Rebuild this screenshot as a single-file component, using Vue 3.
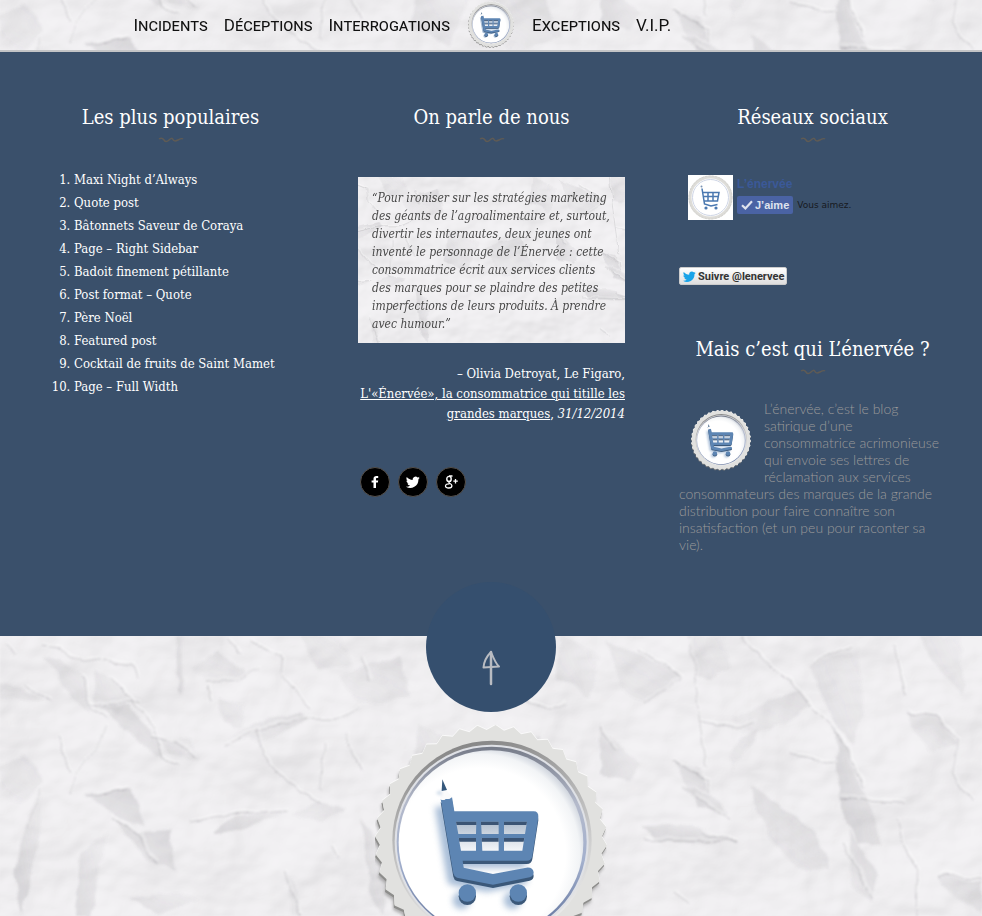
<script setup>
const leftLinks = ['Incidents', 'Déceptions', 'Interrogations']
const rightLinks = ['Exceptions', 'V.I.P.']

const posts = [
  'Maxi Night d’Always',
  'Quote post',
  'Bâtonnets Saveur de Coraya',
  'Page – Right Sidebar',
  'Badoit finement pétillante',
  'Post format – Quote',
  'Père Noël',
  'Featured post',
  'Cocktail de fruits de Saint Mamet',
  'Page – Full Width',
]

const quote = [
  '“Pour ironiser sur les stratégies marketing',
  'des géants de l’agroalimentaire et, surtout,',
  'divertir les internautes, deux jeunes ont',
  'inventé le personnage de l’Énervée : cette',
  'consommatrice écrit aux services clients',
  'des marques pour se plaindre des petites',
  'imperfections de leurs produits. À prendre',
  'avec humour.”',
]

const about = [
  'L’énervée, c’est le blog',
  'satirique d’une',
  'consommatrice acrimonieuse',
  'qui envoie ses lettres de',
  'réclamation aux services',
  'consommateurs des marques de la grande',
  'distribution pour faire connaître son',
  'insatisfaction (et un peu pour raconter sa',
  'vie).',
]

// Serrated edge of the bottle cap: alternating peaks and valleys.
const teeth = 40
const capEdge = Array.from({ length: teeth * 2 }, (_, i) => {
  const angle = (Math.PI * (i + 0.5)) / teeth
  const radius = i % 2 ? 333 : 348
  return `${(348 + radius * Math.sin(angle)).toFixed(1)},${(348 - radius * Math.cos(angle)).toFixed(1)}`
}).join(' ')

// Shaded folds of the crumpled paper: outline and darkness.
const folds = [
  ['42,20 60,24 82,38 92,75 70,60 58,38', 0.16],
  ['0,50 22,52 45,65 55,66 30,64 0,62', 0.13],
  ['92,34 110,42 130,62 118,78 96,68', 0.12],
  ['95,70 130,70 160,110 162,122 140,108 120,86', 0.18],
  ['176,0 184,0 183,58 178,54', 0.18],
  ['194,33 216,14 246,40 240,44 206,45', 0.14],
  ['220,62 244,68 242,92 222,84', 0.1],
  ['228,102 256,86 302,76 308,86 262,106', 0.16],
  ['155,100 188,104 200,124 170,118', 0.12],
  ['84,160 130,152 145,190 118,182 104,168', 0.22],
  ['42,150 40,196 22,280 14,240 30,176', 0.2],
  ['112,182 138,196 170,194 176,236 150,226', 0.22],
  ['212,196 236,180 290,174 250,192 222,198', 0.2],
  ['290,180 320,166 346,172 320,186', 0.14],
  ['80,218 106,196 90,280 76,280', 0.16],
  ['288,236 296,250 300,280 290,280', 0.16],
  ['130,262 180,256 200,264 160,278', 0.14],
  ['606,6 640,18 682,40 644,68 622,52', 0.14],
  ['690,0 724,0 728,32 712,42 694,40', 0.12],
  ['732,82 800,52 812,70 770,94 744,98', 0.14],
  ['808,28 858,12 864,80 850,110 834,84', 0.14],
  ['730,122 742,100 760,94 742,116 732,140', 0.12],
  ['600,88 616,104 640,128 630,144 600,138', 0.16],
  ['672,126 700,134 708,156 690,150', 0.22],
  ['684,148 720,164 728,180 698,170', 0.22],
  ['748,150 770,160 816,196 830,234 800,232 768,200', 0.18],
  ['836,90 856,140 872,170 880,210 856,206 840,170', 0.22],
  ['908,76 940,80 958,110 926,116', 0.15],
  ['640,190 690,188 734,206 700,208 654,204', 0.2],
  ['848,194 878,240 872,266 852,250', 0.2],
  ['920,0 960,0 964,60 940,34', 0.14],
  ['938,240 982,246 982,276 954,262', 0.16],
  ['362,182 384,210 384,280 372,262 366,212', 0.2],
  ['340,40 400,20 410,60 360,70', 0.12],
  ['560,0 600,20 590,60 556,44', 0.1],
  ['0,130 24,120 44,144 20,170 0,160', 0.1],
  ['420,90 470,110 450,160 410,140', 0.12],
  ['480,120 540,100 560,150 510,170', 0.12],
  ['300,0 340,0 352,30 318,34', 0.1],
]

// Crease lines.
const creases = [
  'M40,10 L62,12 L82,26 L104,23 L132,28 L138,42',
  'M8,8 L16,18', 'M52,66 L30,52 L24,48',
  'M110,42 L128,60 L150,84 L162,122 L180,128',
  'M82,38 L92,70 L106,82', 'M92,68 L142,66',
  'M60,100 L66,130 L70,136', 'M106,90 L94,116 L76,134 L68,158',
  'M150,101 L176,106 L196,122', 'M228,4 L240,18', 'M250,6 L280,18 L284,40 L310,72',
  'M206,46 L240,44 L258,30', 'M208,50 L212,66', 'M225,108 L256,94 L300,84 L334,84 L360,73',
  'M256,92 L264,120 L288,148 L322,168', 'M346,96 L360,136', 'M324,108 L320,154',
  'M42,150 L28,190', 'M88,162 L128,152', 'M112,182 L140,200 L156,228',
  'M190,186 L230,178 L288,174', 'M332,210 L338,222', 'M286,236 L300,280',
  'M690,0 L694,40 L706,130', 'M742,0 L772,32 L792,46 L812,70 L836,94 L864,150',
  'M640,12 L682,42 L642,68', 'M700,84 L740,92 L754,86', 'M790,118 L838,128',
  'M812,26 L852,10', 'M672,126 L708,144 L710,158', 'M694,160 L728,182',
  'M906,76 L938,80 L958,104 L953,140 L972,164', 'M840,162 L868,164 L906,166',
  'M898,184 L902,204 L918,234 L916,280', 'M644,204 L736,206 L700,196',
  'M844,208 L872,262', 'M674,256 L690,268', 'M938,240 L982,242', 'M600,90 L616,112',
  'M894,10 L906,60', 'M520,60 L548,74 L566,66', 'M372,46 L362,22',
]
</script>

<template>
  <div class="page">
    <svg class="sprite" width="0" height="0" aria-hidden="true">
      <defs>
        <filter id="relief" x="0" y="0" width="100%" height="100%">
          <feTurbulence type="fractalNoise" baseFrequency="0.009 0.011" numOctaves="4" seed="11" />
          <feDiffuseLighting surfaceScale="9" diffuseConstant="1.05" lighting-color="#f4f3f5">
            <feDistantLight azimuth="235" elevation="66" />
          </feDiffuseLighting>
        </filter>
        <filter id="rough" x="-5%" y="-5%" width="110%" height="110%">
          <feTurbulence type="fractalNoise" baseFrequency="0.05" numOctaves="2" seed="4" result="n" />
          <feDisplacementMap in="SourceGraphic" in2="n" scale="9" xChannelSelector="R" yChannelSelector="G" />
          <feGaussianBlur stdDeviation="0.9" />
        </filter>
        <filter id="soft" x="-30%" y="-30%" width="160%" height="160%"><feGaussianBlur stdDeviation="10" /></filter>
        <filter id="softer" x="-30%" y="-30%" width="160%" height="160%"><feGaussianBlur stdDeviation="4" /></filter>
        <linearGradient id="shade-a" x1="0.9" y1="0" x2="0.1" y2="1">
          <stop offset="0" stop-color="#77757c" />
          <stop offset="1" stop-color="#77757c" stop-opacity="0.15" />
        </linearGradient>
        <linearGradient id="shade-b" x1="0" y1="0.8" x2="1" y2="0.1">
          <stop offset="0" stop-color="#77757c" />
          <stop offset="1" stop-color="#77757c" stop-opacity="0.15" />
        </linearGradient>
        <linearGradient id="groove" x1="0.35" y1="0" x2="0.6" y2="1">
          <stop offset="0" stop-color="#858585" />
          <stop offset="0.35" stop-color="#b4b4b4" />
          <stop offset="0.7" stop-color="#d6d6d6" />
          <stop offset="1" stop-color="#efefef" />
        </linearGradient>
        <linearGradient id="rim" x1="0.5" y1="0" x2="0.5" y2="1">
          <stop offset="0" stop-color="#767b88" />
          <stop offset="0.3" stop-color="#b4bacb" />
          <stop offset="0.6" stop-color="#a3b0cd" />
          <stop offset="1" stop-color="#5c6f99" />
        </linearGradient>
        <radialGradient id="face" cx="0.44" cy="0.56" r="0.58">
          <stop offset="0.8" stop-color="#ffffff" />
          <stop offset="0.93" stop-color="#f2f4f6" />
          <stop offset="1" stop-color="#d3d8e0" />
        </radialGradient>
        <linearGradient id="hole" x1="0" y1="0" x2="0" y2="1">
          <stop offset="0" stop-color="#aebccd" />
          <stop offset="1" stop-color="#f4f6f9" />
        </linearGradient>
        <g id="cart-body">
          <path d="M227,672 Q234,678 243,671 Q253,674 261,666 L268,709 H506 Q521,709 520,726 L502,842 Q500,857 485,857 H293 L296,878 L384,897 L484,878 Q504,876 506,892 Q506,904 494,907 L384,929 L276,908 Q267,905 265,895 Z" />
          <circle cx="307" cy="954" r="26" />
          <circle cx="460" cy="954" r="26" />
        </g>
        <symbol id="cap" viewBox="0 0 696 720">
          <polygon :points="capEdge" fill="#777" opacity="0.55" transform="translate(-4 14)" filter="url(#softer)" />
          <polygon :points="capEdge" fill="#8d8d8b" transform="translate(-2 7)" />
          <polygon :points="capEdge" fill="#fafafa" transform="translate(0 -3)" />
          <polygon :points="capEdge" fill="#e1e1df" />
          <circle cx="351" cy="346" r="299" fill="url(#groove)" />
          <circle cx="350" cy="350" r="291" fill="#dfe1e6" />
          <circle cx="350" cy="350" r="285" fill="url(#rim)" />
          <circle cx="348" cy="353" r="277" fill="url(#face)" />
          <g transform="translate(-30 -450)">
            <use href="#cart-body" transform="translate(-18 22)" fill="#6f93bd" opacity="0.6" filter="url(#soft)" />
            <use href="#cart-body" transform="translate(0 10)" fill="#3b5879" />
            <use href="#cart-body" fill="#5d85b3" />
            <path d="M226,672 L230,648 H246 L261,666 Q253,674 243,671 Q234,678 226,672Z" fill="#fbfbfb" />
            <path d="M212,655 L228,644 L230,662Z" fill="#9db6d2" opacity="0.5" filter="url(#softer)" />
            <path d="M232,613 L246,645 L230,648 Z" fill="#35587c" />
            <path d="M273,740 H334 L333,777 H280Z M348,740 H401 V777 H350Z M417,740 H486 L480,777 H417Z M281,789 H333 V827 H288Z M350,789 H401 V827 H352Z M417,789 H478 L472,827 H417Z" fill="url(#hole)" />
            <path d="M273,740 H334 V750 H275Z M348,740 H401 V750 H348Z M417,740 H486 L484,750 H417Z M281,789 H333 V800 H283Z M350,789 H401 V800 H350Z M417,789 H478 L476,800 H417Z" fill="#3b5474" />
          </g>
        </symbol>
        <symbol id="paper" viewBox="0 0 982 280" preserveAspectRatio="xMidYMid slice">
          <rect width="982" height="280" fill="#efeef0" />
          <rect width="982" height="280" filter="url(#relief)" opacity="0.5" />
          <g filter="url(#rough)">
            <polygon
              v-for="(fold, i) in folds"
              :key="i"
              :points="fold[0]"
              :fill="i % 2 ? 'url(#shade-a)' : 'url(#shade-b)'"
              :opacity="fold[1]"
            />
            <g fill="none" stroke-linejoin="round">
              <path v-for="crease in creases" :key="crease" :d="crease" stroke="#85838a" stroke-width="1" opacity="0.4" />
              <path v-for="crease in creases" :key="'h' + crease" :d="crease" stroke="#fff" stroke-width="2" opacity="0.35" transform="translate(1 -2)" />
            </g>
          </g>
        </symbol>
        <symbol id="bird" viewBox="0 0 24 24">
          <path d="M23.6 4.9c-.9.4-1.8.6-2.8.8 1-.6 1.800-1.600 2.100-2.700-.9.600-2 1-3.100 1.200A4.900 4.900 0 0 0 11.500 8.600C7.400 8.400 3.800 6.500 1.400 3.500c-1.300 2.200-.7 5.100 1.500 6.600-.8 0-1.600-.2-2.200-.6 0 2.300 1.600 4.400 3.900 4.900-.7.200-1.500.2-2.200.1.600 2 2.400 3.400 4.600 3.400A9.900 9.900 0 0 1-.2 19.900 13.900 13.900 0 0 0 21.200 7.500c.9-.7 1.800-1.600 2.400-2.600z" />
        </symbol>
        <symbol id="squiggle" viewBox="0 0 26 6">
          <path d="M1,2 Q4,0 6,3 T11,3 T15,2.500 T20,3 T25,2" fill="none" stroke="#5f5b55" stroke-width="1.500" />
        </symbol>
      </defs>
    </svg>

    <header class="topbar">
      <svg class="paper" aria-hidden="true"><use href="#paper" /></svg>
      <nav class="nav">
        <div class="side side-left">
          <a v-for="link in leftLinks" :key="link" href="#">{{ link }}</a>
        </div>
        <a class="logo" href="#" aria-label="L’énervée"><svg width="46" height="48"><use href="#cap" /></svg></a>
        <div class="side">
          <a v-for="link in rightLinks" :key="link" href="#">{{ link }}</a>
        </div>
      </nav>
    </header>

    <main class="widgets">
      <section>
        <h2>Les plus populaires</h2>
        <svg class="squiggle" width="26" height="6" aria-hidden="true"><use href="#squiggle" /></svg>
        <ol class="posts">
          <li v-for="post in posts" :key="post"><a href="#">{{ post }}</a></li>
        </ol>
      </section>

      <section>
        <h2>On parle de nous</h2>
        <svg class="squiggle" width="26" height="6" aria-hidden="true"><use href="#squiggle" /></svg>
        <blockquote class="quote">
          <svg class="paper" aria-hidden="true"><use href="#paper" /></svg>
          <p><template v-for="(line, i) in quote" :key="i">{{ line }}<br></template></p>
        </blockquote>
        <p class="source">
          – Olivia Detroyat, Le Figaro,<br>
          <a href="#">L'«Énervée», la consommatrice qui titille les<br>grandes marques</a>, <em>31/12/2014</em>
        </p>
        <div class="social">
          <a href="#" aria-label="Facebook">
            <svg width="14" height="14" viewBox="0 0 14 14"><path d="M5.500 13V7.600H3.600V5.400h1.900V3.800C5.500 1.900 6.600 1 8.300 1h1.900v2.100H9c-.8 0-1 .4-1 1v1.300h2.200l-.3 2.200H8V13z" fill="#fff" /></svg>
          </a>
          <a href="#" aria-label="Twitter">
            <svg width="14" height="14" fill="#fff"><use href="#bird" /></svg>
          </a>
          <a href="#" aria-label="Google+">
            <svg width="14" height="14" viewBox="0 0 14 14" fill="none" stroke="#fff">
              <ellipse cx="5" cy="3.900" rx="2.200" ry="2.500" stroke-width="1.400" />
              <path d="M5 1h3.500M6.500 5.500C7 6.500 4.300 6.700 5 7.800c.5.700 2.900 1.100 2.900 2.900 0 1.400-1.300 2.300-3.200 2.300s-3.200-.8-3.200-2.100c0-1.500 1.700-2.200 4-2.100" stroke-width="1.300" />
              <path d="M11.500 4v4.500M9.300 6.200h4.500" stroke-width="1.300" />
            </svg>
          </a>
        </div>
      </section>

      <section>
        <h2>Réseaux sociaux</h2>
        <svg class="squiggle" width="26" height="6" aria-hidden="true"><use href="#squiggle" /></svg>
        <div class="facebook">
          <svg class="avatar" width="45" height="45" viewBox="0 0 45 45" aria-hidden="true">
            <rect width="45" height="45" fill="#fff" />
            <circle cx="22.500" cy="22.500" r="20.500" fill="none" stroke="#dddcd8" stroke-width="3" />
            <circle cx="22.500" cy="22.500" r="21.500" fill="none" stroke="#d3d2ce" stroke-width="1" stroke-dasharray="2 1.400" />
            <circle cx="22.500" cy="22.500" r="18" fill="#fff" stroke="#cfd6e6" stroke-width="1" />
            <path d="M14 13.500 16.500 29 23 31l6.500-1.500M14.500 17.500H31L29.500 26H16.300M15.500 21.500H30M20 18v8M25 18v8" fill="none" stroke="#4a78b0" stroke-width="1.500" />
            <circle cx="13.500" cy="11.500" r="1" fill="#7a93b3" />
            <circle cx="18" cy="33" r="1.600" fill="#4a78b0" />
            <circle cx="28" cy="33" r="1.600" fill="#4a78b0" />
          </svg>
          <div>
            <a class="fb-name" href="#">L’énervée</a>
            <div class="fb-row">
              <button class="like" type="button">
                <svg width="12" height="10" viewBox="0 0 12 10" aria-hidden="true"><path d="M1 5.200 4.400 8.400 11 1.200" fill="none" stroke="#dfe3ee" stroke-width="2.200" /></svg>
                J’aime
              </button>
              <span>Vous aimez.</span>
            </div>
          </div>
        </div>
        <button class="follow" type="button">
          <svg width="13" height="13" fill="#19a3e8" aria-hidden="true"><use href="#bird" /></svg>
          Suivre @lenervee
        </button>

        <h2>Mais c’est qui L’énervée ?</h2>
        <svg class="squiggle" width="26" height="6" aria-hidden="true"><use href="#squiggle" /></svg>
        <div class="about">
          <svg class="about-cap" width="60" height="62" aria-hidden="true"><use href="#cap" /></svg>
          <p><template v-for="(line, i) in about" :key="i">{{ line }}<br></template></p>
        </div>
      </section>
    </main>

    <footer class="bottom">
      <svg class="paper" aria-hidden="true"><use href="#paper" /></svg>
      <div class="crop">
        <svg class="big-cap" width="232" height="240" aria-hidden="true"><use href="#cap" /></svg>
      </div>
      <a class="to-top" href="#" aria-label="Haut de page">
        <svg width="20" height="36" viewBox="0 0 20 36" fill="none" stroke="#b9bcc2" stroke-linecap="round" stroke-linejoin="round">
          <path d="M10 2V34" stroke-width="2.500" />
          <path d="M10 2C6 6 3 11 2.500 17.500L18 16.500C15 14 12 7 10 2" stroke-width="2" />
        </svg>
      </a>
    </footer>
  </div>
</template>

<style>
body {
  margin: 0;
}
</style>

<style scoped>
.page {
  display: flex;
  flex-direction: column;
  min-height: 100vh;
  font-family: "DejaVu Serif Condensed", "DejaVu Serif", serif;
  font-size: 13px;
  color: #fff;
  background: #eeedef;
}
.sprite {
  position: absolute;
}
.paper {
  position: absolute;
  inset: 0;
  width: 100%;
  height: 100%;
}
a {
  color: inherit;
  text-decoration: none;
}
h2,
p,
ol,
blockquote {
  margin: 0;
  padding: 0;
}
.topbar {
  position: relative;
  border-bottom: 2px solid #c3c4c6;
}
.nav {
  position: relative;
  display: grid;
  grid-template-columns: 1fr auto 1fr;
  align-items: center;
  gap: 18px;
  height: 50px;
  font-family: Roboto, "Liberation Sans", sans-serif;
  font-size: 17px;
  font-variant: small-caps;
  color: #111;
}
.side {
  display: flex;
  gap: 16px;
}
.side-left {
  justify-content: flex-end;
}
.logo {
  display: flex;
}
.widgets {
  display: grid;
  grid-template-columns: repeat(3, minmax(0, 1fr));
  gap: 54px;
  box-sizing: border-box;
  min-height: 584px;
  padding: 50px 36px 60px 37px;
  background: #3a506b;
}
h2 {
  font-size: 20px;
  font-weight: 400;
  line-height: 30px;
  text-align: center;
  white-space: nowrap;
}
.squiggle {
  display: block;
  margin: 5px auto 0;
}
.posts {
  margin-top: 25px;
  padding-left: 37px;
  line-height: 23px;
}
.quote {
  position: relative;
  margin-top: 34px;
  padding: 12px 14px 10px;
  color: #484848;
}
.quote p {
  position: relative;
  font-size: 12px;
  font-style: italic;
  line-height: 18px;
  white-space: nowrap;
}
.source {
  margin-top: 21px;
  line-height: 20px;
  text-align: right;
  white-space: nowrap;
}
.source a {
  text-decoration: underline;
}
.social {
  display: flex;
  gap: 8px;
  margin-top: 43px;
  padding-left: 2px;
}
.social a {
  display: flex;
  align-items: center;
  justify-content: center;
  box-sizing: border-box;
  width: 30px;
  height: 30px;
  border: 1px solid #55504b;
  border-radius: 50%;
  background: #000;
}
.facebook {
  display: flex;
  gap: 4px;
  margin: 32px 0 0 9px;
  font-family: "Liberation Sans", Arial, sans-serif;
}
.fb-name {
  display: block;
  font-size: 12px;
  font-weight: 700;
  line-height: 18px;
  color: #3b5998;
}
.fb-row {
  display: flex;
  align-items: center;
  gap: 4px;
  margin-top: 3px;
  font-family: "DejaVu Sans", sans-serif;
  font-size: 9px;
  color: #17191e;
  white-space: nowrap;
}
.like {
  display: flex;
  align-items: center;
  gap: 2px;
  height: 18px;
  padding: 0 4px;
  border: 0;
  border-radius: 2px;
  background: #4a63a4;
  font: 700 11px "Liberation Sans", Arial, sans-serif;
  color: #dfe3ee;
}
.follow {
  display: flex;
  align-items: center;
  gap: 2px;
  height: 18px;
  margin: 47px 0 49px;
  padding: 0 2px 0 3px;
  border: 1px solid #ccc;
  border-radius: 2px;
  background: linear-gradient(#fff, #dedede);
  font: 700 11px Roboto, "Liberation Sans", sans-serif;
  color: #333;
  white-space: nowrap;
}
.about {
  margin-top: 25px;
  font-family: Lato, sans-serif;
  font-size: 14px;
  font-weight: 300;
  line-height: 17px;
  color: #9a9a9a;
  white-space: nowrap;
}
.about-cap {
  float: left;
  margin: 10px 13px 10px 12px;
}
.bottom {
  position: relative;
  flex: 1;
  min-height: 240px;
}
.crop {
  position: absolute;
  inset: 0;
  overflow: hidden;
}
.big-cap {
  display: block;
  margin: 89px auto 0;
}
.to-top {
  position: relative;
  display: flex;
  align-items: center;
  justify-content: center;
  box-sizing: border-box;
  width: 130px;
  height: 130px;
  margin: -54px auto 0;
  padding-top: 42px;
  border-radius: 50%;
  background: #354f6e;
}
</style>
